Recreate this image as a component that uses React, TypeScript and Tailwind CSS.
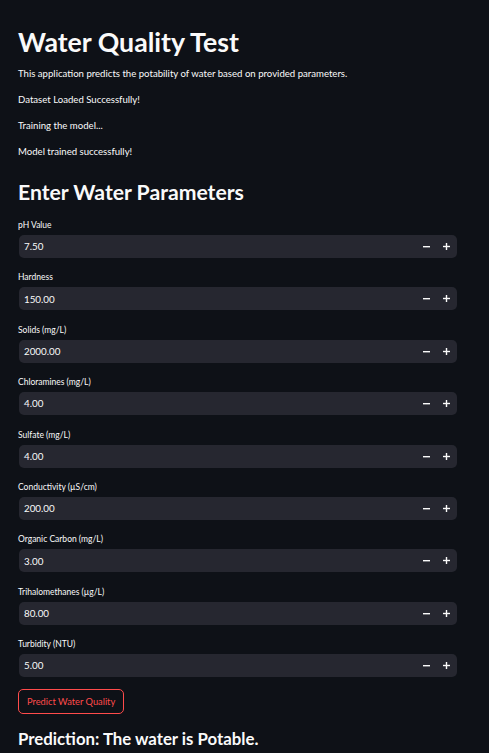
import React from "react";

const fields: [string, string][] = [
  ["pH Value", "7.50"],
  ["Hardness", "150.00"],
  ["Solids (mg/L)", "2000.00"],
  ["Chloramines (mg/L)", "4.00"],
  ["Sulfate (mg/L)", "4.00"],
  ["Conductivity (µS/cm)", "200.00"],
  ["Organic Carbon (mg/L)", "3.00"],
  ["Trihalomethanes (µg/L)", "80.00"],
  ["Turbidity (NTU)", "5.00"],
];

function Field({ label, value }: { label: string; value: string }) {
  return (
    <div className="flex flex-col">
      <div className="text-[8.5px] leading-[12px] text-[#fafafa] h-[17px] pt-[1px]">{label}</div>
      <div className="flex items-center h-[23px] w-[438px] ml-[1px] rounded-[5px] bg-[#262730]">
        <span className="flex-1 pl-[5px] text-[9.8px] text-[#fafafa]">{value}</span>
        <svg width="7" height="7" viewBox="0 0 7 7" className="mr-[13px]">
          <rect x="0" y="3" width="7" height="1.4" fill="#fafafa" />
        </svg>
        <svg width="7" height="7" viewBox="0 0 7 7" className="mr-[7px]">
          <rect x="0" y="2.8" width="7" height="1.4" fill="#fafafa" />
          <rect x="2.8" y="0" width="1.4" height="7" fill="#fafafa" />
        </svg>
      </div>
    </div>
  );
}

export default function App() {
  return (
    <div
      className="min-h-[753px] w-full bg-[#0e1117] text-[#fafafa] px-[18px]"
      style={{ fontFamily: "Lato, 'Open Sans', sans-serif" }}
    >
      <h1 className="pt-[24px] text-[26.7px] leading-[36px] font-bold">Water Quality Test</h1>
      <div className="mt-[7px] flex flex-col gap-[13px] text-[9.6px] leading-[13px]">
        <p>This application predicts the potability of water based on provided parameters.</p>
        <p>Dataset Loaded Successfully!</p>
        <p>Training the model...</p>
        <p>Model trained successfully!</p>
      </div>
      <h2 className="mt-[20px] text-[21.2px] leading-[28px] font-bold">Enter Water Parameters</h2>
      <div className="mt-[12px] flex flex-col gap-[12.4px]">
        {fields.map(([l, v]) => (
          <Field key={l} label={l} value={v} />
        ))}
      </div>
      <button className="mt-[12px] h-[25px] px-[8px] rounded-[5px] border border-[#ff4b4b] text-[#ff4b4b] text-[9.3px]">
        Predict Water Quality
      </button>
      <h3 className="mt-[13px] text-[16.8px] leading-[24px] font-bold">Prediction: The water is Potable.</h3>
    </div>
  );
}
